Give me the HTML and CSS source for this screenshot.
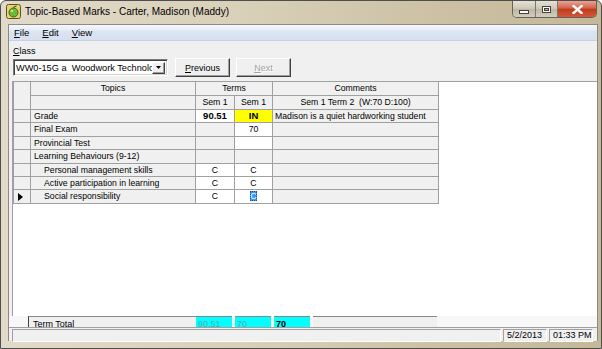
FILE: index.html
```html
<!DOCTYPE html>
<html lang="en">
<head>
    <meta charset="UTF-8">
    <title>Topic-Based Marks</title>
    <link rel="stylesheet" href="styles.css">
</head>
<body>
    <div class="window">
        <div class="titlebar">
            <svg class="app-icon" width="15" height="15" viewBox="0 0 15 15">
                <rect x="0.5" y="0.5" width="14" height="14" rx="2" fill="#e8d46a" stroke="#5a5030"/>
                <circle cx="7.5" cy="8.5" r="4.5" fill="#6fb83a" stroke="#3d6b1c"/>
                <path d="M7.5 4 C8 2.5 9.5 2 10.5 2.5" fill="none" stroke="#3d6b1c" stroke-width="1.2"/>
                <ellipse cx="6" cy="7" rx="1.4" ry="1" fill="#c8f09a"/>
            </svg>
            <span class="title">Topic-Based Marks - Carter, Madison (Maddy)</span>
            <div class="caption-buttons">
                <div class="cap-btn cap-min"><span class="min-glyph"></span></div>
                <div class="cap-btn cap-max"><span class="max-glyph"></span></div>
                <div class="cap-btn cap-close">
                    <svg width="11" height="9" viewBox="0 0 11 9">
                        <path d="M1.5 1 L9.5 8 M9.5 1 L1.5 8" stroke="#fff" stroke-width="2.4" stroke-linecap="square"/>
                    </svg>
                </div>
            </div>
        </div>

        <div class="frame-body">
            <div class="client">
                <div class="menubar">
                    <span class="menu-item"><u>F</u>ile</span>
                    <span class="menu-item"><u>E</u>dit</span>
                    <span class="menu-item"><u>V</u>iew</span>
                </div>

                <div class="class-label"><u>C</u>lass</div>
                <div class="toolbar">
                    <div class="combo">
                        <span class="combo-text">WW0-15G a&nbsp; Woodwork Technology 10</span>
                        <span class="combo-arrow">
                            <svg width="5" height="3" viewBox="0 0 5 3"><path d="M0 0 H5 L2.5 3 Z" fill="#000"/></svg>
                        </span>
                    </div>
                    <button class="btn"><u>P</u>revious</button>
                    <button class="btn" disabled><u>N</u>ext</button>
                </div>

                <div class="grid-area">
                    <div class="marks-grid">
                        <div class="cell hdr ind span-rows"></div>
                        <div class="cell hdr">Topics</div>
                        <div class="cell hdr span-2">Terms</div>
                        <div class="cell hdr">Comments</div>

                        <div class="cell hdr"></div>
                        <div class="cell hdr">Sem 1</div>
                        <div class="cell hdr">Sem 1</div>
                        <div class="cell hdr">Sem 1 Term 2&nbsp; (W:70 D:100)</div>

                        <div class="cell ind"></div>
                        <div class="cell topic">Grade</div>
                        <div class="cell val white bold">90.51</div>
                        <div class="cell val yellow bold">IN</div>
                        <div class="cell comment">Madison is a quiet hardworking student</div>

                        <div class="cell ind"></div>
                        <div class="cell topic">Final Exam</div>
                        <div class="cell val"></div>
                        <div class="cell val white">70</div>
                        <div class="cell comment"></div>

                        <div class="cell ind"></div>
                        <div class="cell topic">Provincial Test</div>
                        <div class="cell val"></div>
                        <div class="cell val white"></div>
                        <div class="cell comment"></div>

                        <div class="cell ind"></div>
                        <div class="cell topic">Learning Behaviours (9-12)</div>
                        <div class="cell val"></div>
                        <div class="cell val"></div>
                        <div class="cell comment"></div>

                        <div class="cell ind"></div>
                        <div class="cell topic sub">Personal management skills</div>
                        <div class="cell val white">C</div>
                        <div class="cell val white">C</div>
                        <div class="cell comment"></div>

                        <div class="cell ind"></div>
                        <div class="cell topic sub">Active participation in learning</div>
                        <div class="cell val white">C</div>
                        <div class="cell val white">C</div>
                        <div class="cell comment"></div>

                        <div class="cell ind current"><span class="row-marker"></span></div>
                        <div class="cell topic sub">Social responsibility</div>
                        <div class="cell val white">C</div>
                        <div class="cell val white"><span class="selected">C</span></div>
                        <div class="cell comment"></div>
                    </div>
                </div>

                <div class="totals">
                    <div class="totals-label">Term Total</div>
                    <div class="total-cell faded">90.51</div>
                    <div class="total-cell faded">70</div>
                    <div class="total-cell">70</div>
                    <div class="totals-rest"></div>
                </div>

                <div class="statusbar">
                    <div class="panel panel-main"></div>
                    <div class="panel panel-date">5/2/2013</div>
                    <div class="panel panel-time">01:33 PM</div>
                </div>
            </div>
        </div>
    </div>
</body>
</html>
```

FILE: styles.css
```css
* {
    margin: 0;
    padding: 0;
    box-sizing: border-box;
}

body {
    width: 602px;
    height: 349px;
    overflow: hidden;
    font-family: "Liberation Sans", Arial, sans-serif;
    font-size: 9px;
    color: #000;
    background: #fff;
}

.window {
    width: 602px;
    height: 349px;
    display: flex;
    flex-direction: column;
    background: linear-gradient(90deg, #e2dac8 0%, #d9d0b9 40%, #cbc0a3 75%, #c4b899 100%);
    border: 1px solid #4e4e4e;
    border-radius: 6px 6px 0 0;
}

/* Title bar */
.titlebar {
    height: 23px;
    display: flex;
    align-items: flex-start;
    padding-left: 5px;
}

.app-icon {
    margin-top: 3px;
    flex-shrink: 0;
}

.title {
    margin-left: 4px;
    margin-top: 5px;
    font-size: 10px;
    color: #000;
    white-space: nowrap;
}

.caption-buttons {
    margin-left: auto;
    margin-right: 4px;
    display: flex;
    height: 17px;
    border: 1px solid #65605a;
    border-top: none;
    border-radius: 0 0 5px 5px;
    overflow: hidden;
}

.cap-btn {
    height: 100%;
    display: flex;
    align-items: center;
    justify-content: center;
}

.cap-min,
.cap-max {
    width: 23px;
    background: linear-gradient(#e6e1d6, #cdc6b6 50%, #bdb5a2 51%, #d3cdbf);
    border-right: 1px solid #7d776c;
}

.cap-max {
    width: 22px;
}

.cap-close {
    width: 38px;
    background: linear-gradient(#e8a493, #d0634a 45%, #c13a1d 50%, #d2583a);
}

.min-glyph {
    width: 10px;
    height: 4px;
    margin-top: 6px;
    background: #fbfbfb;
    border: 1px solid #44403a;
}

.max-glyph {
    width: 9px;
    height: 7px;
    border: 1px solid #44403a;
    box-shadow: inset 0 0 0 1px #fbfbfb, inset 0 0 0 2px #44403a;
}

/* Frame and client area */
.frame-body {
    flex: 1;
    display: flex;
    padding: 0 5px 7px 7px;
}

.client {
    flex: 1;
    display: flex;
    flex-direction: column;
    background: #f0f0f0;
    border: 1px solid #8e8a80;
    border-bottom: none;
}

.menubar {
    height: 16px;
    display: flex;
    align-items: center;
    background: linear-gradient(#f4f7fc 0%, #e8eef8 30%, #dbe4f2 45%, #d6e0f0 100%);
    border-bottom: 1px solid #c6d2e4;
}

.menu-item {
    padding: 0 6px 0 5px;
    font-size: 9.5px;
}

.menu-item + .menu-item {
    margin-left: 2px;
}

.class-label {
    margin: 5px 0 0 4px;
    height: 12px;
    font-size: 9px;
}

.toolbar {
    display: flex;
    align-items: center;
    height: 19px;
    padding-left: 4px;
}

.combo {
    width: 155px;
    height: 17px;
    display: flex;
    align-items: center;
    background: #fff;
    border: 1px solid;
    border-color: #7a7a7a #fff #fff #7a7a7a;
    box-shadow: inset 1px 1px 0 #404040, inset -1px -1px 0 #d4d0c8;
    overflow: hidden;
}

.combo-text {
    flex: 1;
    padding-left: 2px;
    font-size: 9.2px;
    white-space: nowrap;
    overflow: hidden;
}

.combo-arrow {
    width: 13px;
    height: 12px;
    margin-right: 2px;
    display: flex;
    align-items: center;
    justify-content: center;
    background: #f0f0f0;
    border: 1px solid;
    border-color: #fff #404040 #404040 #fff;
    box-shadow: inset -1px -1px 0 #a0a0a0;
}

.btn {
    width: 55px;
    height: 19px;
    margin-left: 6px;
    font-family: inherit;
    font-size: 9px;
    background: #f0f0f0;
    color: #000;
    border: 1px solid;
    border-color: #fff #404040 #404040 #fff;
    box-shadow: inset -1px -1px 0 #a0a0a0;
}

.btn:first-of-type {
    margin-left: 7px;
}

.btn:disabled {
    color: #a0a0a0;
    text-shadow: 1px 1px 0 #fff;
}

/* Marks grid */
.grid-area {
    flex: 1;
    margin: 4px 0 0 3px;
    background: #fff;
    border-top: 1px solid #a0a0a0;
    border-left: 1px solid #a0a0a0;
}

.marks-grid {
    display: grid;
    grid-template-columns: 17px 165px 39px 38px 166px;
    grid-template-rows: 14px 14px repeat(7, 13.4px);
    width: max-content;
    border-left: 1px solid #a0a0a0;
}

.cell {
    border-right: 1px solid #a0a0a0;
    border-bottom: 1px solid #a0a0a0;
    background: #f0f0f0;
    white-space: nowrap;
    overflow: hidden;
    line-height: 12px;
    font-size: 8.7px;
}

.hdr {
    text-align: center;
    line-height: 13px;
}

.span-rows {
    grid-row: span 2;
}

.span-2 {
    grid-column: span 2;
}

.topic {
    padding-left: 3px;
}

.topic.sub {
    padding-left: 13px;
}

.val {
    text-align: center;
}

.white {
    background: #fff;
}

.yellow {
    background: #ffff00;
}

.bold {
    font-weight: bold;
    font-size: 9.5px;
}

.comment {
    padding-left: 2px;
}

.current {
    display: flex;
    align-items: center;
    padding-left: 4px;
}

.row-marker {
    width: 0;
    height: 0;
    border-top: 4px solid transparent;
    border-bottom: 4px solid transparent;
    border-left: 5px solid #000;
}

.selected {
    background: #3399ff;
    color: #fff;
    outline: 1px dotted #1d4f91;
    outline-offset: -1px;
}

/* Totals row (partly hidden) */
.totals {
    height: 11px;
    display: flex;
    overflow: hidden;
    background: #f7f7f7;
    padding-left: 19px;
}

.totals-label {
    width: 168px;
    height: 14px;
    padding-left: 4px;
    font-size: 9px;
    line-height: 14px;
    background: #f0f0f0;
    border-top: 1px solid #888;
    border-left: 1px solid #404040;
}

.total-cell {
    width: 36px;
    height: 14px;
    margin-right: 3px;
    padding-left: 2px;
    background: #00ffff;
    border-top: 1px solid #888;
    font-size: 9px;
    line-height: 14px;
    font-weight: bold;
}

.total-cell.faded {
    color: #5aa8b0;
    font-weight: normal;
}

.totals-rest {
    width: 124px;
    height: 14px;
    background: #f0f0f0;
    border-top: 1px solid #888;
}

/* Status bar */
.statusbar {
    height: 14px;
    display: flex;
    gap: 2px;
    padding: 1px 4px 0 3px;
    border-top: 1px solid #a0a0a0;
    background: #f0f0f0;
}

.panel {
    height: 13px;
    border: 1px solid;
    border-color: #a0a0a0 #fff #fff #a0a0a0;
    font-size: 9px;
    line-height: 11px;
    padding-left: 3px;
    white-space: nowrap;
}

.panel-main {
    width: 489px;
}

.panel-date {
    width: 44px;
}

.panel-time {
    width: 44px;
}
```
